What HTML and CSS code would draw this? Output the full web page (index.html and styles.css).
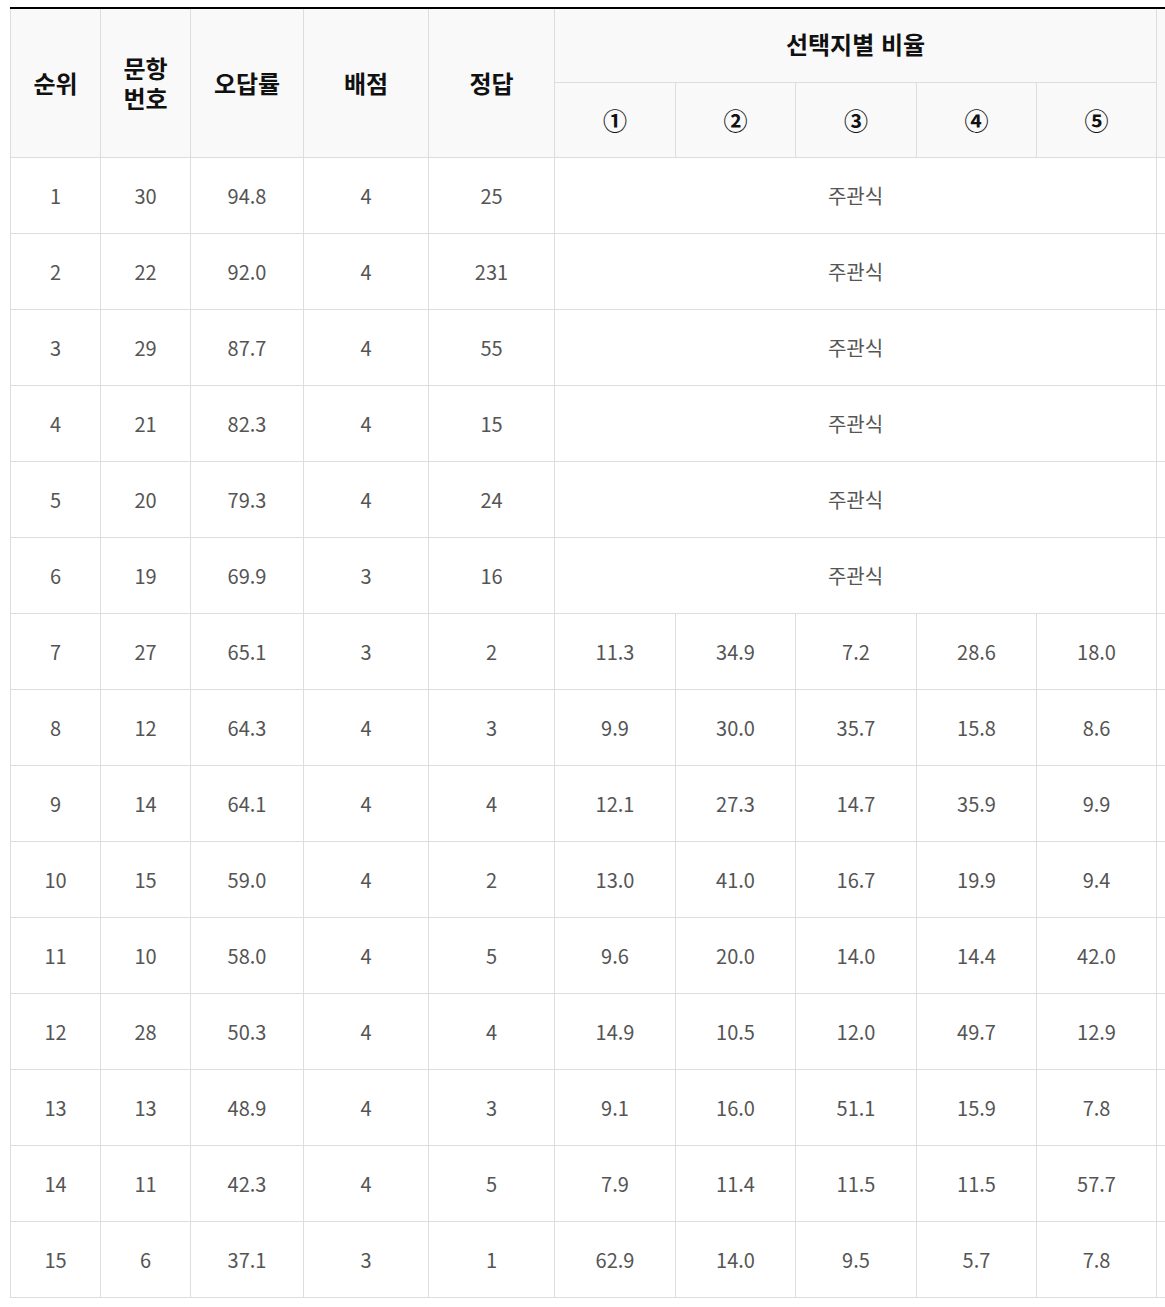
FILE: index.html
```html
<!DOCTYPE html>
<html lang="ko">
<head>
<meta charset="utf-8">
<link rel="stylesheet" href="styles.css">
</head>
<body>
<div class="wrap">
<table class="rank">
  <colgroup>
    <col class="c1"><col class="c2"><col class="c3"><col class="c4"><col class="c5">
    <col class="c6"><col class="c7"><col class="c8"><col class="c9"><col class="c10"><col class="c11">
  </colgroup>
  <thead>
    <tr class="h1">
      <th rowspan="2">순위</th>
      <th rowspan="2">문항<br>번호</th>
      <th rowspan="2">오답률</th>
      <th rowspan="2">배점</th>
      <th rowspan="2">정답</th>
      <th colspan="5" class="group">선택지별 비율</th>
      <th rowspan="2"></th>
    </tr>
    <tr class="h2">
      <th>①</th><th>②</th><th>③</th><th>④</th><th>⑤</th>
    </tr>
  </thead>
  <tbody>
    <tr><td>1</td><td>30</td><td>94.8</td><td>4</td><td>25</td><td colspan="5">주관식</td><td></td></tr>
    <tr><td>2</td><td>22</td><td>92.0</td><td>4</td><td>231</td><td colspan="5">주관식</td><td></td></tr>
    <tr><td>3</td><td>29</td><td>87.7</td><td>4</td><td>55</td><td colspan="5">주관식</td><td></td></tr>
    <tr><td>4</td><td>21</td><td>82.3</td><td>4</td><td>15</td><td colspan="5">주관식</td><td></td></tr>
    <tr><td>5</td><td>20</td><td>79.3</td><td>4</td><td>24</td><td colspan="5">주관식</td><td></td></tr>
    <tr><td>6</td><td>19</td><td>69.9</td><td>3</td><td>16</td><td colspan="5">주관식</td><td></td></tr>
    <tr><td>7</td><td>27</td><td>65.1</td><td>3</td><td>2</td><td>11.3</td><td>34.9</td><td>7.2</td><td>28.6</td><td>18.0</td><td></td></tr>
    <tr><td>8</td><td>12</td><td>64.3</td><td>4</td><td>3</td><td>9.9</td><td>30.0</td><td>35.7</td><td>15.8</td><td>8.6</td><td></td></tr>
    <tr><td>9</td><td>14</td><td>64.1</td><td>4</td><td>4</td><td>12.1</td><td>27.3</td><td>14.7</td><td>35.9</td><td>9.9</td><td></td></tr>
    <tr><td>10</td><td>15</td><td>59.0</td><td>4</td><td>2</td><td>13.0</td><td>41.0</td><td>16.7</td><td>19.9</td><td>9.4</td><td></td></tr>
    <tr><td>11</td><td>10</td><td>58.0</td><td>4</td><td>5</td><td>9.6</td><td>20.0</td><td>14.0</td><td>14.4</td><td>42.0</td><td></td></tr>
    <tr><td>12</td><td>28</td><td>50.3</td><td>4</td><td>4</td><td>14.9</td><td>10.5</td><td>12.0</td><td>49.7</td><td>12.9</td><td></td></tr>
    <tr><td>13</td><td>13</td><td>48.9</td><td>4</td><td>3</td><td>9.1</td><td>16.0</td><td>51.1</td><td>15.9</td><td>7.8</td><td></td></tr>
    <tr><td>14</td><td>11</td><td>42.3</td><td>4</td><td>5</td><td>7.9</td><td>11.4</td><td>11.5</td><td>11.5</td><td>57.7</td><td></td></tr>
    <tr><td>15</td><td>6</td><td>37.1</td><td>3</td><td>1</td><td>62.9</td><td>14.0</td><td>9.5</td><td>5.7</td><td>7.8</td><td></td></tr>
  </tbody>
</table>
</div>
</body>
</html>
```
FILE: styles.css
```css
html, body {
  margin: 0;
  padding: 0;
  background: #fff;
  overflow: hidden;
}
.wrap {
  margin: 7px 0 0 10px;
  width: 1155px;
  overflow: hidden;
}
.rank {
  border-collapse: collapse;
  table-layout: fixed;
  width: 1266px;
  border-top: 2px solid #000;
  font-family: "Noto Sans CJK KR", "Noto Sans", sans-serif;
}
.c1 { width: 90px; }
.c2 { width: 90px; }
.c3 { width: 113px; }
.c4 { width: 125px; }
.c5 { width: 126px; }
.c6 { width: 121px; }
.c7 { width: 120px; }
.c8 { width: 121px; }
.c9 { width: 120px; }
.c10 { width: 120px; }
.c11 { width: 120px; }
.rank th, .rank td {
  border: 1px solid #dddddd;
  padding: 0;
  text-align: center;
  vertical-align: middle;
}
.rank th {
  background: #f9f9f9;
  color: #111;
  font-size: 24px;
  font-weight: 700;
  line-height: 30px;
}
.rank .h1 th { height: 73px; }
.rank .h1 .group { padding-bottom: 3px; height: 70px; }
.rank .h2 th { height: 74px; }
.rank td {
  height: 75px;
  color: #555;
  font-size: 20px;
  font-weight: 400;
}
```
